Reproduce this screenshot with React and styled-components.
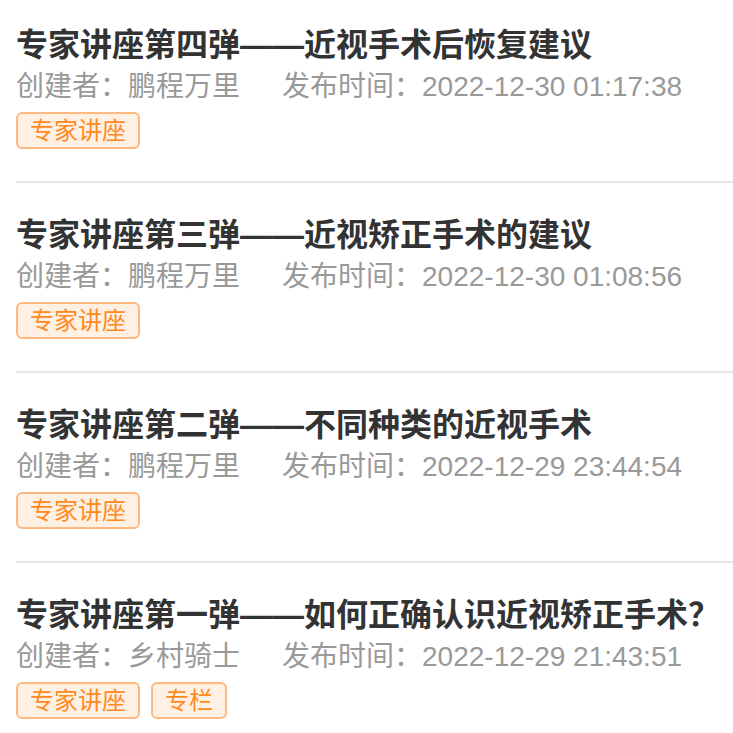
import React from 'react'
import styled, { createGlobalStyle } from 'styled-components'

const GlobalStyle = createGlobalStyle`
  body {
    margin: 0;
    background: #fff;
    font-family: "Liberation Sans", "Noto Sans CJK SC", sans-serif;
  }
`

const List = styled.section`
  margin-top: -7px;
  padding-left: 16px;
`

const Item = styled.article`
  padding: 30px 0 32px;
  border-bottom: ${p => (p.last ? 'none' : '2px solid #e5e5ea')};
`

const Title = styled.h2`
  margin: 0;
  font-size: 32px;
  line-height: 44px;
  font-weight: 700;
  color: #333;
  white-space: nowrap;
`

const Meta = styled.div`
  display: flex;
  font-size: 28px;
  line-height: 40px;
  color: #999;
  white-space: nowrap;
`

const Published = styled.span`
  margin-left: 42px;
`

const Tags = styled.div`
  display: flex;
  gap: 11px;
  margin-top: 5px;
`

const Tag = styled.span`
  display: inline-block;
  padding: 0 12px;
  height: 33px;
  line-height: 34px;
  font-size: 24px;
  color: #ff8a1e;
  background: #fff0e4;
  border: 2px solid #ffb880;
  border-radius: 6px;
`

const posts = [
  {
    title: '专家讲座第四弹——近视手术后恢复建议',
    author: '鹏程万里',
    time: '2022-12-30 01:17:38',
    tags: ['专家讲座']
  },
  {
    title: '专家讲座第三弹——近视矫正手术的建议',
    author: '鹏程万里',
    time: '2022-12-30 01:08:56',
    tags: ['专家讲座']
  },
  {
    title: '专家讲座第二弹——不同种类的近视手术',
    author: '鹏程万里',
    time: '2022-12-29 23:44:54',
    tags: ['专家讲座']
  },
  {
    title: '专家讲座第一弹——如何正确认识近视矫正手术？',
    author: '乡村骑士',
    time: '2022-12-29 21:43:51',
    tags: ['专家讲座', '专栏']
  }
]

export default function App() {
  return (
    <>
      <GlobalStyle />
      <List>
        {posts.map((post, i) => (
          <Item key={post.time} last={i === posts.length - 1}>
            <Title>{post.title}</Title>
            <Meta>
              <span>创建者：{post.author}</span>
              <Published>发布时间：{post.time}</Published>
            </Meta>
            <Tags>
              {post.tags.map(tag => (
                <Tag key={tag}>{tag}</Tag>
              ))}
            </Tags>
          </Item>
        ))}
      </List>
    </>
  )
}
